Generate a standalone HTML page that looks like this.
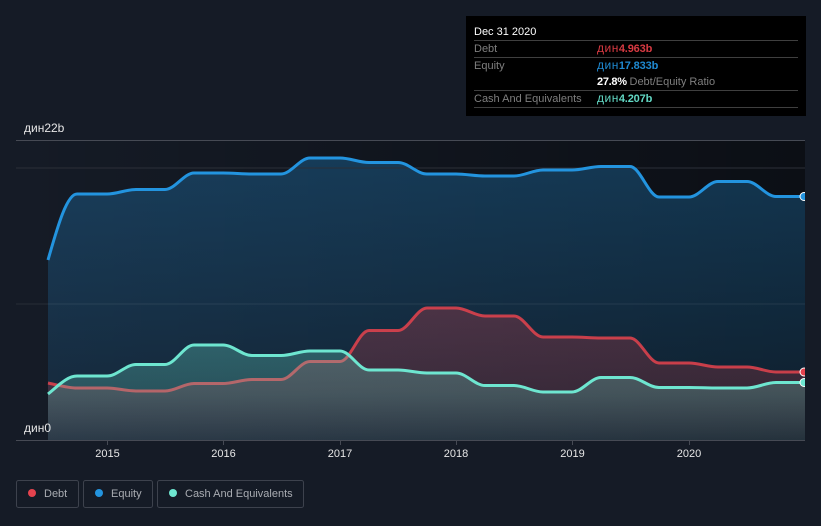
<!DOCTYPE html>
<html>
<head>
<meta charset="utf-8">
<style>
html,body{margin:0;padding:0;background:#151b26;width:821px;height:526px;overflow:hidden}
svg{display:block;font-family:"Liberation Sans",sans-serif}
</style>
</head>
<body>
<svg width="821" height="526" viewBox="0 0 821 526" xmlns="http://www.w3.org/2000/svg">
<defs>
<linearGradient id="bg" x1="0" x2="1" y1="0" y2="0"><stop offset="0" stop-color="#000" stop-opacity="0"/><stop offset="1" stop-color="#000" stop-opacity=".45"/></linearGradient>
<linearGradient id="ge" gradientUnits="userSpaceOnUse" x1="0" x2="0" y1="150" y2="440"><stop offset="0" stop-color="#2394df" stop-opacity=".3"/><stop offset="1" stop-color="#2394df" stop-opacity=".1"/></linearGradient>
<linearGradient id="gd" gradientUnits="userSpaceOnUse" x1="0" x2="0" y1="300" y2="440"><stop offset="0" stop-color="#e5434e" stop-opacity=".27"/><stop offset=".64" stop-color="#e5434e" stop-opacity=".19"/><stop offset="1" stop-color="#e5434e" stop-opacity=".05"/></linearGradient>
<linearGradient id="gc" gradientUnits="userSpaceOnUse" x1="0" x2="0" y1="345" y2="440"><stop offset="0" stop-color="#6ee6d0" stop-opacity=".28"/><stop offset=".53" stop-color="#6ee6d0" stop-opacity=".22"/><stop offset="1" stop-color="#8adcd0" stop-opacity=".1"/></linearGradient>
<clipPath id="cp"><rect x="16" y="130" width="789" height="320"/></clipPath>
</defs>

<rect x="16" y="140" width="789" height="300" fill="url(#bg)"/>

<path fill="url(#ge)" d="M48 260 C58 225 67 194 77 194 H107 c10 0 19 -4.5 29 -4.5 H165 c10 0 19 -16.5 29 -16.5 H223 c10 0 19 1 29 1 H281 c10 0 19 -16 29 -16 H340 c10 0 19 4.5 29 4.5 H398 c10 0 19 11.5 29 11.5 H456 c10 0 19 2 29 2 H514 c10 0 19 -6 29 -6 H572 c10 0 19 -3.5 29 -3.5 H630 c10 0 19 30.5 29 30.5 H689 c10 0 19 -15.5 29 -15.5 H747 c10 0 19 15 29 15 H805 V440 H48 Z"/>

<rect x="16" y="140" width="789" height="1" fill="#464a54"/>
<rect x="16" y="167.500" width="789" height="1" fill="#2b2f38"/>
<rect x="16" y="303.500" width="789" height="1" fill="#ffffff" fill-opacity=".08"/>

<path fill="none" stroke="#2394df" stroke-width="3" d="M48 260 C58 225 67 194 77 194 H107 c10 0 19 -4.5 29 -4.5 H165 c10 0 19 -16.5 29 -16.5 H223 c10 0 19 1 29 1 H281 c10 0 19 -16 29 -16 H340 c10 0 19 4.5 29 4.5 H398 c10 0 19 11.5 29 11.5 H456 c10 0 19 2 29 2 H514 c10 0 19 -6 29 -6 H572 c10 0 19 -3.5 29 -3.5 H630 c10 0 19 30.5 29 30.5 H689 c10 0 19 -15.5 29 -15.5 H747 c10 0 19 15 29 15 H804"/>

<path fill="url(#gd)" d="M48 383 C58 385 67 388 77 388 H107 c10 0 19 3 29 3 H165 c10 0 19 -7.5 29 -7.5 H223 c10 0 19 -4 29 -4 H281 c10 0 19 -18 29 -18 H340 c10 0 19 -31 29 -31 H398 c10 0 19 -22.5 29 -22.5 H456 c10 0 19 8 29 8 H514 c10 0 19 21 29 21 H572 c10 0 19 1 29 1 H630 c10 0 19 25 29 25 H689 c10 0 19 4 29 4 H747 c10 0 19 5 29 5 H805 V440 H48 Z"/>
<path fill="none" stroke="#e5434e" stroke-opacity=".85" stroke-width="3" d="M48 383 C58 385 67 388 77 388 H107 c10 0 19 3 29 3 H165 c10 0 19 -7.5 29 -7.5 H223 c10 0 19 -4 29 -4 H281 c10 0 19 -18 29 -18 H340 c10 0 19 -31 29 -31 H398 c10 0 19 -22.5 29 -22.5 H456 c10 0 19 8 29 8 H514 c10 0 19 21 29 21 H572 c10 0 19 1 29 1 H630 c10 0 19 25 29 25 H689 c10 0 19 4 29 4 H747 c10 0 19 5 29 5 H804"/>

<path fill="url(#gc)" d="M48 394 C58 386 67 376 77 376 H107 c10 0 19 -11.5 29 -11.5 H165 c10 0 19 -19.5 29 -19.5 H223 c10 0 19 10.5 29 10.5 H281 c10 0 19 -4.5 29 -4.5 H340 c10 0 19 19 29 19 H398 c10 0 19 3 29 3 H456 c10 0 19 12.5 29 12.5 H514 c10 0 19 6.5 29 6.5 H572 c10 0 19 -14.5 29 -14.5 H630 c10 0 19 10 29 10 H689 c10 0 19 .5 29 .5 H747 c10 0 19 -5.5 29 -5.5 H805 V440 H48 Z"/>
<path fill="none" stroke="#6ee6d0" stroke-width="3" d="M48 394 C58 386 67 376 77 376 H107 c10 0 19 -11.5 29 -11.5 H165 c10 0 19 -19.5 29 -19.5 H223 c10 0 19 10.5 29 10.5 H281 c10 0 19 -4.5 29 -4.5 H340 c10 0 19 19 29 19 H398 c10 0 19 3 29 3 H456 c10 0 19 12.5 29 12.5 H514 c10 0 19 6.5 29 6.5 H572 c10 0 19 -14.5 29 -14.5 H630 c10 0 19 10 29 10 H689 c10 0 19 .5 29 .5 H747 c10 0 19 -5.5 29 -5.5 H804"/>

<g clip-path="url(#cp)" stroke="#fff" stroke-width="1">
<circle cx="804" cy="196.500" r="4" fill="#2394df"/>
<circle cx="804" cy="372" r="4" fill="#e5434e"/>
<circle cx="804" cy="382.500" r="4" fill="#6ee6d0"/>
</g>

<rect x="16" y="440" width="789" height="1" fill="#464a54"/>
<g fill="#464a54">
<rect x="107" y="441" width="1" height="4"/><rect x="223" y="441" width="1" height="4"/><rect x="340" y="441" width="1" height="4"/><rect x="456" y="441" width="1" height="4"/><rect x="572" y="441" width="1" height="4"/><rect x="689" y="441" width="1" height="4"/>
</g>

<g fill="#e6e6e6">
<text x="24" y="132" font-size="12">дин22b</text>
<text x="24" y="432" font-size="12">дин0</text>
<g text-anchor="middle" font-size="11">
<text x="107.500" y="457">2015</text><text x="223.500" y="457">2016</text><text x="340" y="457">2017</text><text x="456" y="457">2018</text><text x="572.500" y="457">2019</text><text x="689" y="457">2020</text>
</g>
</g>

<rect x="466" y="16" width="340" height="100" fill="#000"/>
<g fill="#3f3f3f">
<rect x="474" y="40" width="324" height="1"/><rect x="474" y="57" width="324" height="1"/><rect x="474" y="90" width="324" height="1"/><rect x="474" y="107" width="324" height="1"/>
</g>
<g font-size="11">
<text x="474" y="35" fill="#fff">Dec 31 2020</text>
<text x="474" y="52" fill="#7f7f7f">Debt</text>
<text x="474" y="69" fill="#7f7f7f">Equity</text>
<text x="474" y="102" fill="#7f7f7f">Cash And Equivalents</text>
<text x="597" y="52" fill="#d83a42"><tspan font-size="12" letter-spacing=".5">дин</tspan><tspan font-weight="700" letter-spacing="-.15">4.963b</tspan></text>
<text x="597" y="69" fill="#1f8ad2"><tspan font-size="12" letter-spacing=".5">дин</tspan><tspan font-weight="700" letter-spacing="-.15">17.833b</tspan></text>
<text x="597" y="85" fill="#fff" font-weight="700" letter-spacing="-.3">27.8%</text>
<text x="629.500" y="85" fill="#7f7f7f">Debt/Equity Ratio</text>
<text x="597" y="102" fill="#62d8c4"><tspan font-size="12" letter-spacing=".5">дин</tspan><tspan font-weight="700" letter-spacing="-.15">4.207b</tspan></text>
</g>

<g fill="none" stroke="#3d424d">
<rect x="16.500" y="480.500" width="62" height="27" rx="2"/>
<rect x="83.500" y="480.500" width="69" height="27" rx="2"/>
<rect x="157.500" y="480.500" width="146" height="27" rx="2"/>
</g>
<circle cx="32" cy="493" r="4" fill="#e5434e"/>
<circle cx="99" cy="493" r="4" fill="#2394df"/>
<circle cx="173" cy="493" r="4" fill="#6ee6d0"/>
<g font-size="11" fill="#a9acb2">
<text x="44" y="497">Debt</text>
<text x="111" y="497">Equity</text>
<text x="185" y="497">Cash And Equivalents</text>
</g>
</svg>
</body>
</html>
